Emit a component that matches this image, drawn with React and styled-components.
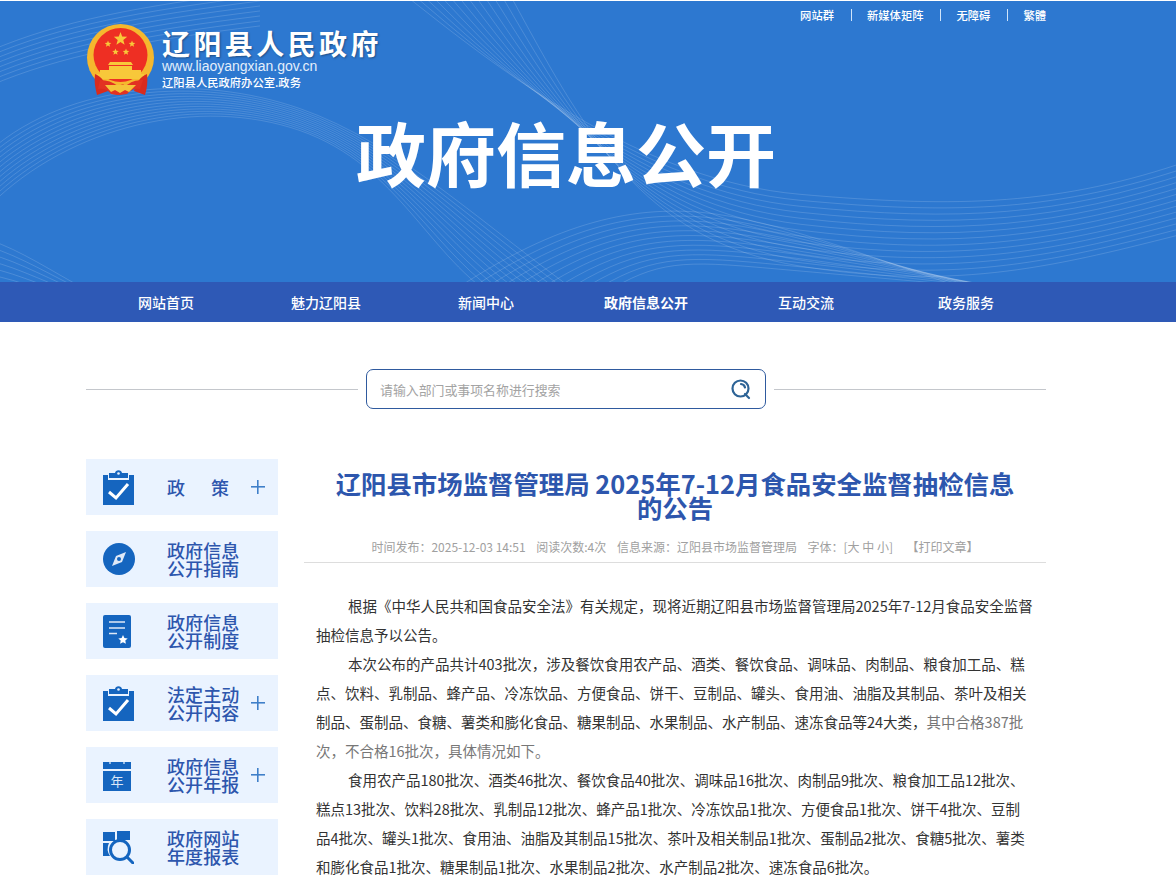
import React from "react";
import styled, { createGlobalStyle } from "styled-components";

const Global = createGlobalStyle`
  html, body { margin: 0; padding: 0; background: #fff; }
  body { font-family: "Noto Sans CJK SC", "Noto Sans", sans-serif; color: #333; overflow: hidden; height: 883px; }
  * { box-sizing: border-box; }
`;
const Hero = styled.header`position: relative; height: 282px; border-top: 1px solid #fff; background: #2d78d0; overflow: hidden;`;
const HeroInner = styled.div`position: relative; width: 960px; margin-left: 86px; height: 100%; display: flex; flex-direction: column;`;
const Waves = styled.svg`position: absolute; inset: 0; width: 100%; height: 100%;`;
const TopLinks = styled.nav`display: flex; justify-content: flex-end; align-items: center; height: 28px; font-size: 11.3px; font-weight: 500; color: #fff;`;
const TopLink = styled.span`
  padding: 0 ${p => p.$last ? 0 : 17}px 0 ${p => p.$first ? 0 : 15}px;
  line-height: 12px;
  border-right: ${p => p.$last ? "none" : "1px solid #cfe4fa"};
`;
const Brand = styled.div`display: flex; align-items: flex-start; gap: 3px; margin-top: -5px; height: 72px;`;
const BrandText = styled.div`display: flex; flex-direction: column; color: #fff; margin-top: 3px;`;
const BrandName = styled.div`font-size: 28px; font-weight: 700; line-height: 32px; letter-spacing: 3.4px; text-shadow: 1px 1px 2px rgba(0,0,0,.35);`;
const BrandUrl = styled.div`font-family: "Liberation Sans", sans-serif; font-size: 14px; line-height: 15px; color: #e3eefb;`;
const BrandSub = styled.div`font-size: 11.3px; font-weight: 500; line-height: 15px; margin-top: 1px;`;
const HeroTitle = styled.h1`margin: 13px 0 0; text-align: center; font-size: 70px; line-height: 86px; font-weight: 700; color: #fff;`;
const NavBar = styled.nav`height: 40px; background: #2e59b6;`;
const NavInner = styled.div`width: 960px; margin-left: 86px; display: grid; grid-template-columns: repeat(6, 160px);`;
const NavItem = styled.a`text-align: center; line-height: 40px; font-size: 14px; font-weight: ${p => p.$active ? 700 : 500}; color: #fff;`;
const SearchRow = styled.div`width: 960px; margin: 47px 0 0 86px; display: flex; align-items: center; gap: 8px;`;
const Rule = styled.div`flex: 1; height: 1px; margin-top: 1px; background: #c4c7cc;`;
const SearchBox = styled.div`width: 400px; height: 40px; border: 1px solid #2f5a9e; border-radius: 7px; display: flex; align-items: center; justify-content: space-between; padding: 0 13px;`;
const Placeholder = styled.span`font-size: 12.9px; color: #a3a3a3;`;
const Main = styled.main`width: 960px; margin: 50px 0 0 86px; display: flex; align-items: flex-start; gap: 26px;`;
const Side = styled.aside`width: 192px; flex: none; display: flex; flex-direction: column; gap: 16px;`;
const SideItem = styled.a`height: 56px; background: #eaf3ff; display: flex; align-items: center; padding-left: 17px; position: relative;`;
const IconSlot = styled.span`width: 64px; flex: none; display: flex; align-items: center;`;
const SideLabel = styled.span`font-size: 18px; line-height: 18px; font-weight: 500; color: #2d56ad; letter-spacing: ${p => p.$wide ? 4 : 0.1}px; white-space: pre-line; width: 80px;`;
const Plus = styled.span`
  position: absolute; left: 165px; top: 21px; width: 14px; height: 14px;
  background: linear-gradient(#3f7fc9, #3f7fc9) center / 14px 1.6px no-repeat, linear-gradient(#3f7fc9, #3f7fc9) center / 1.6px 14px no-repeat;
`;
const Article = styled.article`flex: 1; min-width: 0;`;
const Title = styled.h2`margin: 12px 0 0; padding: 0 20px; text-align: center; font-size: 25.4px; line-height: 24px; font-weight: 700; color: #2d56ad;`;
const Meta = styled.div`margin-top: 16px; height: 28px; border-bottom: 1px solid #ddd; display: flex; justify-content: center; gap: 10.6px; font-size: 12px; line-height: 24px; color: #a0a0a0; white-space: pre;`;
const MetaPrint = styled.span`margin-left: 3px;`;
const Body = styled.div`padding: 28px 12px 0; font-size: 14.5px; line-height: 29px; color: #333;`;
const Para = styled.p`margin: 0; text-indent: 32px;`;
const Muted = styled.span`color: #777;`;

const Clipboard = () => (
  <svg width="31" height="35" viewBox="0 0 31 35"><path fill="#1565bf" fillRule="evenodd" d="M0 5h5v5h21V5h5v30H0z"/><path fill="#1565bf" d="M6 3h6a3.6 3.6 0 0 1 7 0h6v5H6z"/><circle cx="15.500" cy="3.500" r="1.300" fill="#eaf3ff"/><path d="M6 22l7 6L25 14" fill="none" stroke="#fff" strokeWidth="3"/></svg>
);
const Compass = () => (
  <svg width="32" height="32" viewBox="0 0 32 32"><circle cx="16" cy="16" r="16" fill="#1565bf"/><path d="M23 9l-4 10-10 4 4-10z" fill="#dfe9f7"/><circle cx="16" cy="16" r="2" fill="#1565bf"/></svg>
);
const DocStar = () => (
  <svg width="28" height="33" viewBox="0 0 28 33"><rect width="28" height="33" rx="2" fill="#1565bf"/><path d="M6 7h16M6 13h16M6 18.500h8" stroke="#dfe9f7" strokeWidth="1.700"/><path d="M20 20l1.400 3 3.300.4-2.400 2.200.6 3.200-2.900-1.600-2.900 1.600.6-3.200-2.400-2.200 3.300-.4z" fill="#fff"/></svg>
);
const Calendar = () => (
  <svg width="28" height="31" viewBox="0 0 28 31"><path d="M0 2h28v7H0z" fill="#1565bf"/><path d="M0 11h28v20H0z" fill="#1565bf"/><path d="M7 0v4M21 0v4" stroke="#eaf3ff" strokeWidth="1.200"/><text x="14" y="26" textAnchor="middle" fontSize="13" fill="#dbe7f7" fontFamily="Noto Sans CJK SC">年</text></svg>
);
const ReportSearch = () => (
  <svg width="31" height="33" viewBox="0 0 31 33"><path fill="#1565bf" d="M0 1h12v9H0zM14 0h13v9H14zM0 12h6a13 13 0 0 0 1 13H0z"/><circle cx="17" cy="19" r="9.500" fill="none" stroke="#1565bf" strokeWidth="3"/><path d="M24 26l6 6" stroke="#1565bf" strokeWidth="3" strokeLinecap="round"/></svg>
);
const star = (cx, cy, r) => {
  const pts = Array.from({ length: 10 }, (_, i) => {
    const a = -Math.PI / 2 + (i * Math.PI) / 5;
    const rad = i % 2 ? r * 0.42 : r;
    return `${(cx + rad * Math.cos(a)).toFixed(1)},${(cy + rad * Math.sin(a)).toFixed(1)}`;
  });
  return pts.join(" ");
};
const Emblem = () => (
  <svg width="73" height="72" viewBox="0 0 73 72">
    <circle cx="34.500" cy="33.500" r="33.500" fill="#f5b82e"/>
    <circle cx="34.500" cy="31" r="27" fill="#ee2f23"/>
    <g fill="#f8c83a">
      <polygon points={star(34.500, 15, 7)} />
      <polygon points={star(22, 20, 3.500)} />
      <polygon points={star(46, 20, 3.500)} />
      <polygon points={star(29.500, 28, 3.500)} />
      <polygon points={star(40, 28, 3.500)} />
      <path d="M24 38h21l2 3H22zM23 42h23v4H23zM14 46h41v4H14zM11 50h47v5H11z"/>
    </g>
    <path d="M9 50c7 3 11 9 13 17l-11 4c-2-8-3-14-2-21zM61 50c1 8 0 14-2 21l-11-4c2-8 6-14 13-17z" fill="#d92b1e"/>
    <path d="M14 56c7 0 13 2 18 6 3-2 6-2 8 0 4-4 10-6 17-6l-3 9c-6-1-9 1-13 5l-7 1h-3l-6-1c-3-4-7-6-13-5z" fill="#e23222"/>
    <path d="M19 61h31l-7 7-4-2-5 3-5-3-4 2z" fill="#f4c33a"/>
  </svg>
);
const SearchGlyph = () => (
  <svg width="22" height="22" viewBox="0 0 22 22"><circle cx="10.500" cy="10.500" r="8" fill="none" stroke="#2d6396" strokeWidth="2.200"/><path d="M11 6a4.500 4.500 0 0 1 4 3.500M15 16l4 4" fill="none" stroke="#2d6396" strokeWidth="2.200" strokeLinecap="round"/></svg>
);

const range = n => Array.from({ length: n }, (_, i) => i);
const WaveArt = () => (
  <Waves viewBox="0 0 1176 282" preserveAspectRatio="none">
    <g fill="none" stroke="#fff" strokeOpacity=".15" strokeWidth="1">
      {range(12).map(i => <path key={"a" + i} d={`M-10 ${205 - i * 5} C 70 ${125 - i * 4}, 200 ${95 - i * 2}, 300 ${130 - i * 2} S ${430 + i * 5} ${260 - i * 3}, ${500 + i * 8} 300`} />)}
      {range(13).map(i => <path key={"c" + i} d={`M${400 + i * 9} -10 C ${500 + i * 7} ${70 + i * 5}, 640 ${180 + i * 5}, 800 ${194 + i * 6} S 1060 ${205 + i * 5}, 1190 ${160 + i * 6}`} />)}
      {range(12).map(i => <path key={"b" + i} d={`M${440 + i * 14} 300 C ${540 + i * 10} ${230 + i * 3}, ${620 + i * 5} ${205 + i * 5}, ${700 + i * 5} ${212 + i * 5} S ${880 + i * 6} ${262 + i * 2}, ${1000 + i * 12} 300`} />)}
      {range(8).map(i => <path key={"d" + i} d={`M-10 ${240 + i * 7} C 20 ${250 + i * 6}, 50 ${270 + i * 5}, 90 ${292 + i * 2}`} />)}
      {range(8).map(i => <path key={"e" + i} d={`M-10 ${50 + i * 5} C 60 ${20 + i * 5}, 140 ${5 + i * 5}, 260 ${-10 + i * 5}`} />)}
    </g>
  </Waves>
);

const sideItems = [
  { icon: <Clipboard />, label: "政　策", plus: true, wide: true },
  { icon: <Compass />, label: "政府信息\n公开指南" },
  { icon: <DocStar />, label: "政府信息\n公开制度" },
  { icon: <Clipboard />, label: "法定主动\n公开内容", plus: true },
  { icon: <Calendar />, label: "政府信息\n公开年报", plus: true },
  { icon: <ReportSearch />, label: "政府网站\n年度报表" },
];

export default function App() {
  return (
    <>
      <Global />
      <Hero>
        <WaveArt />
        <HeroInner>
          <TopLinks>
            <TopLink $first>网站群</TopLink>
            <TopLink>新媒体矩阵</TopLink>
            <TopLink>无障碍</TopLink>
            <TopLink $last>繁體</TopLink>
          </TopLinks>
          <Brand>
            <Emblem />
            <BrandText>
              <BrandName>辽阳县人民政府</BrandName>
              <BrandUrl>www.liaoyangxian.gov.cn</BrandUrl>
              <BrandSub>辽阳县人民政府办公室.政务</BrandSub>
            </BrandText>
          </Brand>
          <HeroTitle>政府信息公开</HeroTitle>
        </HeroInner>
      </Hero>
      <NavBar>
        <NavInner>
          <NavItem>网站首页</NavItem>
          <NavItem>魅力辽阳县</NavItem>
          <NavItem>新闻中心</NavItem>
          <NavItem $active>政府信息公开</NavItem>
          <NavItem>互动交流</NavItem>
          <NavItem>政务服务</NavItem>
        </NavInner>
      </NavBar>
      <SearchRow>
        <Rule />
        <SearchBox>
          <Placeholder>请输入部门或事项名称进行搜索</Placeholder>
          <SearchGlyph />
        </SearchBox>
        <Rule />
      </SearchRow>
      <Main>
        <Side>
          {sideItems.map((it, i) => (
            <SideItem key={i}>
              <IconSlot>{it.icon}</IconSlot>
              <SideLabel $wide={it.wide}>{it.label}</SideLabel>
              {it.plus && <Plus />}
            </SideItem>
          ))}
        </Side>
        <Article>
          <Title>辽阳县市场监督管理局 2025年7-12月食品安全监督抽检信息的公告</Title>
          <Meta>
            <span>时间发布：2025-12-03 14:51</span>
            <span>阅读次数:4次</span>
            <span>信息来源：辽阳县市场监督管理局</span>
            <span>字体：[大 中 小]</span>
            <MetaPrint>【打印文章】</MetaPrint>
          </Meta>
          <Body>
            <Para>根据《中华人民共和国食品安全法》有关规定，现将近期辽阳县市场监督管理局2025年7-12月食品安全监督抽检信息予以公告。</Para>
            <Para>本次公布的产品共计403批次，涉及餐饮食用农产品、酒类、餐饮食品、调味品、肉制品、粮食加工品、糕点、饮料、乳制品、蜂产品、冷冻饮品、方便食品、饼干、豆制品、罐头、食用油、油脂及其制品、茶叶及相关制品、蛋制品、食糖、薯类和膨化食品、糖果制品、水果制品、水产制品、速冻食品等24大类，<Muted>其中合格387批次，不合格16批次，具体情况如下。</Muted></Para>
            <Para>食用农产品180批次、酒类46批次、餐饮食品40批次、调味品16批次、肉制品9批次、粮食加工品12批次、糕点13批次、饮料28批次、乳制品12批次、蜂产品1批次、冷冻饮品1批次、方便食品1批次、饼干4批次、豆制品4批次、罐头1批次、食用油、油脂及其制品15批次、茶叶及相关制品1批次、蛋制品2批次、食糖5批次、薯类和膨化食品1批次、糖果制品1批次、水果制品2批次、水产制品2批次、速冻食品6批次。</Para>
          </Body>
        </Article>
      </Main>
    </>
  );
}
